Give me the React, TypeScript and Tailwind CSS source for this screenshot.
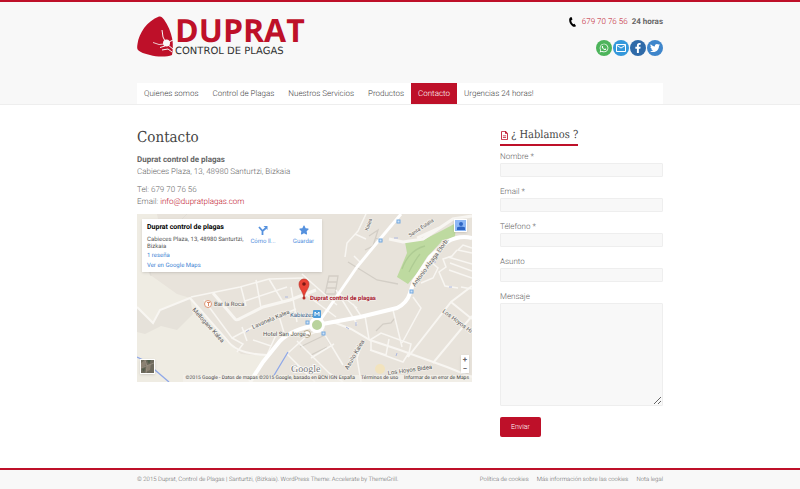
import { FaFacebookF, FaStar, FaTwitter, FaWhatsapp } from "react-icons/fa";
import { FaRegFileLines } from "react-icons/fa6";
import { MdOutlineEmail } from "react-icons/md";

const navItems = [
  { label: "Quienes somos" },
  { label: "Control de Plagas" },
  { label: "Nuestros Servicios" },
  { label: "Productos" },
  { label: "Contacto", active: true },
  { label: "Urgencias 24 horas!" },
];

const fields = [
  { id: "nombre", label: "Nombre *", type: "text" },
  { id: "email", label: "Email *", type: "email" },
  { id: "telefono", label: "Télefono *", type: "tel" },
  { id: "asunto", label: "Asunto", type: "text" },
];

function Logo() {
  return (
    <a href="#" className="flex items-start gap-[2px]">
      <svg viewBox="0 0 36 41" className="h-[41px] w-9">
        <path
          d="M22 0.5C24 0 25 1 27 3.500C31 9 34 16 35.500 24C36 29 36 34 35 39C30 41 20 41 13 39C8 38 3 36 1 34C0 33 0 31 0.500 28C2 17 10 5 22 0.500Z"
          fill="#be1029"
        />
        <circle cx="29.500" cy="27" r="3.500" fill="#f8f8f8" />
        <g stroke="#f8f8f8" fill="none">
          <path d="M28 25L26 21L25 14" strokeWidth="1" />
          <path d="M27 28L22 28.500L16 26.500" strokeWidth="0.8" />
          <path d="M28 30L23 31.500" strokeWidth="1" />
          <path d="M25 34L31 33L35 36M32 26L36 24M31 29L36 33" strokeWidth="1" />
        </g>
      </svg>
      <span className="flex flex-col">
        <span className="font-['Open_Sans'] text-[32px] leading-[30px] font-bold text-[#be1029]">
          DUPRAT
        </span>
        <span className="font-['DejaVu_Sans'] text-[10px] leading-3 text-[#333]">
          CONTROL DE PLAGAS
        </span>
      </span>
    </a>
  );
}

function Header() {
  return (
    <header className="border-t-2 border-b border-t-[#be1029] border-b-[#eee] bg-[#f8f8f8]">
      <div className="mx-auto max-w-[526px]">
        <div className="flex h-[81px] items-start justify-between pt-[14px]">
          <Logo />
          <div className="flex flex-col items-end gap-3">
            <p className="flex items-center text-[8px] leading-3">
              <svg viewBox="0 0 7 10" className="mr-[6px] h-[10px] w-[7px]">
                <path
                  d="M2.500 0L3.500 2.500L2.300 3.300C2.300 5 3 6.200 4.200 7.200L5.500 6.800L7 9C6 10 4.800 10.200 3.500 9.200C1 7.200 0 5 0.200 2.500C0.300 1 1.200 0.200 2.500 0Z"
                  fill="#000"
                />
              </svg>
              <a href="#" className="mr-1 font-light text-[#be1029]">
                679 70 76 56
              </a>
              <strong className="font-bold">24 horas</strong>
            </p>
            <div className="flex gap-[1px] text-white">
              <a href="#" aria-label="WhatsApp" className="flex size-4 items-center justify-center rounded-full bg-[#4db45b]">
                <FaWhatsapp className="size-[10px]" />
              </a>
              <a href="#" aria-label="Email" className="flex size-4 items-center justify-center rounded-full bg-[#3498db]">
                <MdOutlineEmail className="size-3" />
              </a>
              <a href="#" aria-label="Facebook" className="flex size-4 items-center justify-center rounded-full bg-[#2f6aa8]">
                <FaFacebookF className="size-[10px]" />
              </a>
              <a href="#" aria-label="Twitter" className="flex size-4 items-center justify-center rounded-full bg-[#3f86cb]">
                <FaTwitter className="size-[10px]" />
              </a>
            </div>
          </div>
        </div>
        <nav className="flex bg-white">
          {navItems.map((item) => (
            <a
              key={item.label}
              href="#"
              className={
                item.active
                  ? "bg-[#be1029] px-[7px] text-[8px] leading-[21px] font-light text-white"
                  : "px-[7px] text-[8px] leading-[21px] font-light text-[#444]"
              }
            >
              {item.label}
            </a>
          ))}
        </nav>
      </div>
    </header>
  );
}

function MapDrawing() {
  return (
    <svg viewBox="0 0 335 168" preserveAspectRatio="xMidYMid slice" className="h-full w-full" fill="none">
      <rect width="335" height="168" fill="#e8e3db" />
      <path d="M0 0H20L24 20L8 34L12 60L40 80L53 84L90 128L104 140L130 142L113 168H0Z" fill="#efece3" />
      <path d="M0 93L16 109L23 96L53 84L56 100L40 116L24 112L8 120L0 118Z" fill="#e6e2da" />
      <path d="M268 28L286 26L306 16L319 9L318 23L306 26L290 43L280 59L271 70L260 63L270 39Z" fill="#bedaa0" />
      <circle cx="243" cy="155" r="5" fill="#f2e3bd" />

      {/* footpaths */}
      <g stroke="#d3cec6" strokeWidth="1.300">
        <path d="M211 48L240 66L261 70" />
        <path d="M232 22L241 16L236 32L228 36M238 24L246 27" />
        <path d="M192 62H201L198 80H188ZM190 68H200M190 74H199" />
        <path d="M239 117L246 110L254 109L258 104" />
        <path d="M163 133L188 121L194 132M174 141L190 133" />
        <path d="M265 55Q272 36 288 32M272 58Q278 46 283 40" stroke="#aecb93" />
      </g>

      {/* small streets */}
      <g stroke="#f8f6f2" strokeWidth="1.500">
        <path d="M0 93L16 109L23 96L53 84L90 126Q99 140 130 141" strokeWidth="2" />
        <path d="M54 83L103 73L132 65L166 64M67 86L95 124L112 115L159 95" />
        <path d="M76 79L98 105Q100 107 104 104L126 93L153 86L179 76" strokeWidth="3" />
        <path d="M104 73L109 92M119 66L124 94M108 87L150 73M132 65L146 88M154 73L160 108M163 76L199 103" />
        <path d="M50 0L32 18Q20 22 18 32L26 48L12 52L14 62" strokeWidth="1" stroke="#e1ddd6" />
        <path d="M95 124L106 130L100 138M130 141L139 121M105 113L110 127M116 126L134 132M142 102L148 122" />
        <path d="M160 127L192 159L206 168M150 140L178 168M151 139L171 121L185 116L206 151M174 144L197 130" />
        <path d="M229 0L221 17L210 29L208 43M218 20L229 25M217 42L223 48" />
        <path d="M252 25L266 28L286 25L316 5L335 2M280 24L302 14" strokeWidth="3" />
        <path d="M335 34L326 31L321 36L335 39M320 36L315 42L306 45L309 53L302 58L308 72L321 74M311 43L335 50M313 49L335 57M312 56L335 64M324 73L335 75" />
        <path d="M294 48L301 54L296 64L284 69M276 83L284 94L265 129M256 96L265 133" />
        <path d="M196 108L214 115L233 126L263 136L310 153L335 163" strokeWidth="2" />
        <path d="M228 102L232 125M233 126L244 119L274 130L271 143M233 136L266 148L273 137M234 127L234 136L249 141L252 125M226 127L220 144L224 168" />
        <path d="M335 72L314 88L271 143M335 102L296 149M314 88L335 105" strokeWidth="2" />
        <path d="M199 76L220 110M216 90L224 102M203 80L220 94M165 60L176 70L200 91" />
      </g>

      {/* main roads */}
      <g stroke="#fff" strokeWidth="4" strokeLinejoin="round">
        <path d="M264 0L243 25L220 53L180 111" strokeWidth="3" />
        <path d="M113 168L126 148L143 127Q155 115 180 111L223 103L260 94Q270 89 273 79L277 67L293 43L310 28Q322 21 335 24" />
      </g>
      <circle cx="180" cy="111" r="6.500" fill="#b9d39d" stroke="#fff" strokeWidth="3" />
      <path d="M0 143Q10 147 18 156L32 168M151 138L136 163" stroke="#8fa8e8" strokeWidth="1.300" />

      {/* bus stops */}
      <g fill="#cfe2f7" stroke="#73a9df">
        <rect x="260" y="6" width="3" height="3" />
        <rect x="242" y="25" width="3" height="3" />
        <rect x="273" y="76" width="3" height="3" />
        <rect x="169" y="107" width="3" height="3" />
        <rect x="185" y="118" width="3" height="3" />
      </g>
      <path d="M148 83H151M109 118L112 116M219 108V112M209 113L212 115M257 24H261M296 48H299M312 73H315M260 139L259 142" stroke="#adb8df" />

      {/* places */}
      <circle cx="71" cy="90" r="3.500" fill="#fff" stroke="#df9776" />
      <path d="M70 88.500H73M71.500 89V92" stroke="#d16b3f" strokeWidth="0.8" />
      <circle cx="170" cy="120" r="3.500" fill="#fff" stroke="#b9aa8b" />
      <path d="M168 119V122M168 121H172V122" stroke="#6c5b45" strokeWidth="0.8" />

      <g fill="#555" stroke="#f4f1eb" strokeWidth="1.500" paintOrder="stroke" fontFamily="Roboto, sans-serif" fontSize="6">
        <text x="77" y="92">Bar la Roca</text>
        <text x="126" y="122">Hotel San Jorge</text>
        <text x="153" y="103" fill="#37618b">Kabiezes</text>
        <text transform="translate(55 96) rotate(48)">Mellogane Kalea</text>
        <text transform="translate(116 115) rotate(-23)">Lavanela Kalea</text>
        <text transform="translate(273 23) rotate(-33)" fontSize="5">Santa Eulalia</text>
        <text transform="translate(278 73) rotate(-54)">Antonio Alzaga Etorb.</text>
        <text transform="translate(211 156) rotate(-60)">Asuilo Kalea</text>
        <text transform="translate(305 98) rotate(37)">Los Hoyos Hi</text>
        <text transform="translate(251 161) rotate(-8)">Los Hoyos Bidea</text>
        <text transform="translate(231 17) rotate(-70)" fontSize="5">Kalea</text>
        <text x="173" y="86" fill="#a5132b" fontWeight="700">Duprat control de plagas</text>
      </g>
      <text x="154" y="158" fontFamily="Liberation Serif, serif" fontSize="10" fill="#777" stroke="#fff" strokeWidth="1.500" paintOrder="stroke">
        Google
      </text>
      <rect x="176" y="96" width="8" height="8" rx="1" fill="#4e9cda" />
      <path d="M178 102V98L180 100.500L182 98V102" stroke="#fff" />

      <path d="M167 84C166 77 162 75 162 70A5 5 0 0 1 172 70C172 75 168 77 167 84Z" fill="#ea4335" stroke="#b52d25" strokeWidth="0.6" />
      <circle cx="167" cy="70" r="1.800" fill="#7d1914" />
      <circle cx="167" cy="84" r="1.500" fill="#b52d25" />
    </svg>
  );
}

function MapPanel() {
  return (
    <div className="relative h-[168px] overflow-hidden">
      <MapDrawing />
      <div className="absolute top-[5px] left-[5px] flex h-[53px] w-[180px] bg-white pt-1 pl-[5px] text-[6px] leading-[7px] text-[#555] shadow">
        <div className="w-[98px]">
          <h3 className="mb-1 text-[7px] leading-[9px] font-bold whitespace-nowrap text-black">
            Duprat control de plagas
          </h3>
          <p>Cabieces Plaza, 13, 48980 Santurtzi, Bizkaia</p>
          <a href="#" className="mt-[2px] block text-[#4285d4]">1 reseña</a>
          <a href="#" className="mt-[3px] block text-[#4285d4]">Ver en Google Maps</a>
        </div>
        <a href="#" className="flex w-9 flex-col items-center gap-[3px] pt-[2px] text-[#5591de]">
          <svg viewBox="0 0 10 10" className="size-[10px]" fill="none" stroke="currentColor" strokeWidth="1.800">
            <path d="M4.500 10V6L1 2M4.500 6L8 3" />
            <path d="M5.500 1H9.500V5Z" fill="currentColor" stroke="none" />
          </svg>
          Cómo ll...
        </a>
        <a href="#" className="flex flex-1 flex-col items-center gap-[3px] pt-[2px] pl-1 text-[#5591de]">
          <FaStar className="size-[10px]" />
          Guardar
        </a>
      </div>
      <button aria-label="Iniciar sesión" className="absolute top-[5px] right-[5px] flex size-[13px] items-center justify-center border border-white bg-[#8db7f5] shadow-sm">
        <svg viewBox="0 0 10 10" className="size-[10px]" fill="#2f66c4">
          <circle cx="5" cy="3" r="2" />
          <path d="M1 9V7Q1 5.500 5 5.500Q9 5.500 9 7V9Z" />
        </svg>
      </button>
      <button aria-label="Satélite" className="absolute bottom-2 left-[3px] size-[15px] border border-white bg-[#6e6a5d] shadow">
        <svg viewBox="0 0 13 13" className="size-[13px]">
          <path d="M0 3L4 0L5 5L0 8ZM6 6L10 4L9 10L5 12Z" fill="#8b8173" />
          <path d="M6 0H10L8 4ZM1 9L4 8L3 12Z" fill="#4f5c4b" />
          <path d="M4 0L6 6L5 13M0 8L13 3" stroke="#a0978a" strokeWidth="0.7" fill="none" />
        </svg>
      </button>
      <div className="absolute right-[3px] bottom-[9px] flex w-2 flex-col bg-white text-[8px] leading-[9px] font-bold text-[#666] shadow-sm">
        <button aria-label="Acercar">+</button>
        <button aria-label="Alejar">−</button>
      </div>
      <div className="absolute right-0 bottom-0 flex gap-[6px] bg-[#f5f2ed]/70 px-[3px] text-[5px] leading-[7px] whitespace-nowrap text-[#444]">
        <span>©2015 Google - Datos de mapas ©2015 Google, basado en BCN IGN España</span>
        <a href="#">Términos de uso</a>
        <a href="#">Informar de un error de Maps</a>
      </div>
    </div>
  );
}

function ContactForm() {
  return (
    <form className="w-[163px] shrink-0">
      <h2 className="mb-[5px] flex w-fit items-center gap-[2px] border-b-2 border-[#be1029] font-['Roboto_Slab','DejaVu_Serif_Condensed','DejaVu_Serif',serif] text-[11px] leading-[18px] text-[#444]">
        <FaRegFileLines className="size-[9px] text-[#be1029]" />
        ¿ Hablamos ?
      </h2>
      {fields.map((field) => (
        <div key={field.id} className="mb-[9px]">
          <label htmlFor={field.id} className="block text-[8px] leading-3 font-light">
            {field.label}
          </label>
          <input
            id={field.id}
            type={field.type}
            className="block h-[14px] w-full rounded-[1px] border border-[#eee] bg-[#f8f8f8] px-1 text-[8px]"
          />
        </div>
      ))}
      <label htmlFor="mensaje" className="block text-[8px] leading-3 font-light">
        Mensaje
      </label>
      <textarea
        id="mensaje"
        className="block h-[103px] w-full rounded-[1px] border border-[#eee] bg-[#f8f8f8] p-1 text-[8px]"
      />
      <button type="submit" className="mt-[11px] h-5 rounded-[2px] bg-[#be1029] px-[11px] text-[7px] font-light text-white">
        Enviar
      </button>
    </form>
  );
}

export default function App() {
  return (
    <div className="flex min-h-screen flex-col bg-white font-[Roboto,sans-serif] text-[#666] [text-rendering:geometricPrecision]">
      <Header />

      <main className="mx-auto flex w-full max-w-[526px] flex-1 gap-7 pt-[21px] pb-7">
        <div className="min-w-0 flex-1">
          <h1 className="mb-[6px] font-['Roboto_Slab','DejaVu_Serif_Condensed','DejaVu_Serif',serif] text-[15px] leading-[22px] text-[#444]">
            Contacto
          </h1>
          <div className="mb-[6px] text-[8px] leading-3 font-light">
            <p className="font-bold">Duprat control de plagas</p>
            <p>Cabieces Plaza, 13, 48980 Santurtzi, Bizkaia</p>
          </div>
          <div className="mb-[6px] text-[8px] leading-3 font-light">
            <p>Tel: 679 70 76 56</p>
            <p>
              Email:{" "}
              <a href="#" className="text-[#be1029]">
                info@dupratplagas.com
              </a>
            </p>
          </div>
          <MapPanel />
        </div>
        <ContactForm />
      </main>

      <footer className="border-t-2 border-[#be1029] bg-[#f8f8f8]">
        <div className="mx-auto flex max-w-[526px] justify-between text-[6px] leading-[19px] font-light">
          <p>
            © 2015 Duprat, Control de Plagas | Santurtzi, (Bizkaia). WordPress Theme: Accelerate by ThemeGrill.
          </p>
          <nav className="flex gap-2">
            <a href="#">Política de cookies</a>
            <a href="#">Más información sobre las cookies</a>
            <a href="#">Nota legal</a>
          </nav>
        </div>
      </footer>
    </div>
  );
}
